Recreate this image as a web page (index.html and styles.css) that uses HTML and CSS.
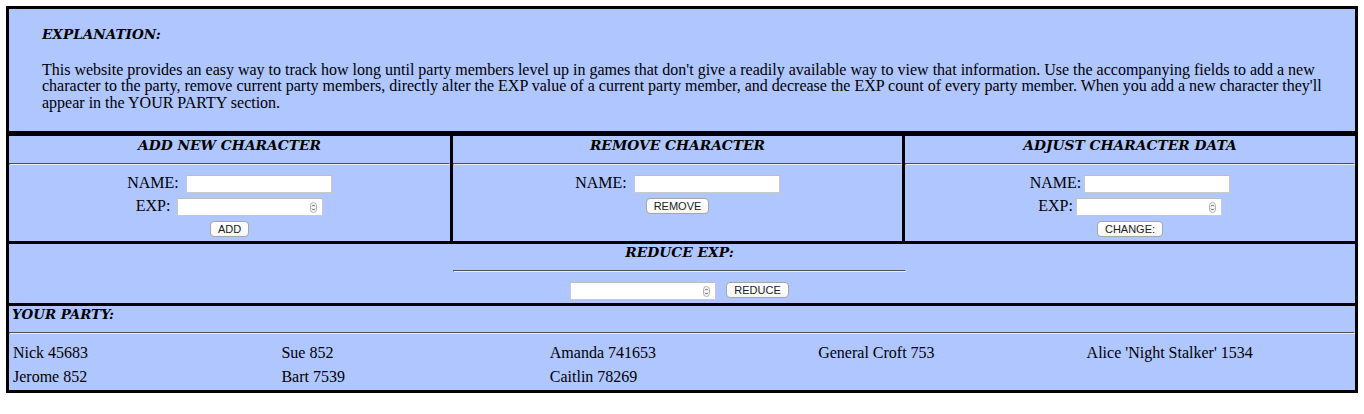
FILE: index.html
```html
<!DOCTYPE html>
<html lang="en">
<head>
<meta charset="utf-8">
<title>Party EXP Tracker</title>
<link rel="stylesheet" href="styles.css">
</head>
<body>
<div class="app">
  <section class="explain">
    <h3 class="explain-title">EXPLANATION:</h3>
    <p class="explain-text">This website provides an easy way to track how long until party members level up in games that don't give a readily available way to view that information. Use the accompanying fields to add a new character to the party, remove current party members, directly alter the EXP value of a current party member, and decrease the EXP count of every party member. When you add a new character they'll appear in the YOUR PARTY section.</p>
  </section>

  <div class="tools">
    <section class="tool">
      <h4 class="head">ADD NEW CHARACTER</h4>
      <hr class="rule">
      <div class="form">
        <label class="field"><span class="lbl">NAME:</span><input class="txt" type="text"></label>
        <label class="field"><span class="lbl">EXP:</span><span class="num"><input class="txt" type="number"><svg class="spin" viewBox="0 0 7 11" width="7" height="11"><rect x="0.5" y="0.5" width="6" height="10" rx="3" fill="#fafafa" stroke="#a0a0a0" stroke-width="0.8"/><path d="M2.1 4.3 L3.5 2.9 L4.9 4.3 M2.1 6.7 L3.5 8.1 L4.9 6.7" fill="none" stroke="#333" stroke-width="0.9"/></svg></span></label>
        <button class="btn" type="button">ADD</button>
      </div>
    </section>

    <section class="tool">
      <h4 class="head">REMOVE CHARACTER</h4>
      <hr class="rule">
      <div class="form">
        <label class="field"><span class="lbl">NAME:</span><input class="txt" type="text"></label>
        <button class="btn" type="button">REMOVE</button>
      </div>
    </section>

    <section class="tool">
      <h4 class="head">ADJUST CHARACTER DATA</h4>
      <hr class="rule">
      <div class="form">
        <label class="field field-tight"><span class="lbl">NAME:</span><input class="txt" type="text"></label>
        <label class="field field-tight"><span class="lbl">EXP:</span><span class="num"><input class="txt" type="number"><svg class="spin" viewBox="0 0 7 11" width="7" height="11"><rect x="0.5" y="0.5" width="6" height="10" rx="3" fill="#fafafa" stroke="#a0a0a0" stroke-width="0.8"/><path d="M2.1 4.3 L3.5 2.9 L4.9 4.3 M2.1 6.7 L3.5 8.1 L4.9 6.7" fill="none" stroke="#333" stroke-width="0.9"/></svg></span></label>
        <button class="btn" type="button">CHANGE:</button>
      </div>
    </section>
  </div>

  <section class="reduce">
    <h4 class="head head-reduce">REDUCE EXP:</h4>
    <hr class="rule rule-short">
    <div class="reduce-row">
      <span class="num"><input class="txt" type="number"><svg class="spin" viewBox="0 0 7 11" width="7" height="11"><rect x="0.5" y="0.5" width="6" height="10" rx="3" fill="#fafafa" stroke="#a0a0a0" stroke-width="0.8"/><path d="M2.1 4.3 L3.5 2.9 L4.9 4.3 M2.1 6.7 L3.5 8.1 L4.9 6.7" fill="none" stroke="#333" stroke-width="0.9"/></svg></span>
      <button class="btn" type="button">REDUCE</button>
    </div>
  </section>

  <section class="party">
    <h4 class="head head-party">YOUR PARTY:</h4>
    <hr class="rule">
    <div class="members">
      <div class="member">Nick 45683</div>
      <div class="member">Sue 852</div>
      <div class="member">Amanda 741653</div>
      <div class="member">General Croft 753</div>
      <div class="member">Alice 'Night Stalker' 1534</div>
      <div class="member">Jerome 852</div>
      <div class="member">Bart 7539</div>
      <div class="member">Caitlin 78269</div>
    </div>
  </section>
</div>
</body>
</html>
```

FILE: styles.css
```css
html, body {
  background: #ffffff;
}

body {
  margin: 6px;
  font-family: "Liberation Serif", "Times New Roman", serif;
  font-size: 16px;
  color: #000;
}

.app {
  border: 3px solid #000;
  background: #afc6fe;
}

/* ---------- explanation ---------- */
.explain {
  padding: 17px 33px 19px 33px;
  border-bottom: 5px solid #000;
}

.explain-title,
.head {
  margin: 0;
  font-family: "DejaVu Serif", "Liberation Serif", serif;
  font-size: 13.8px;
  line-height: 16px;
  font-weight: bold;
  font-style: italic;
}

.explain-title {
  font-size: 13.6px;
}

.explain-text {
  margin: 19.5px 0 0 0;
  font-size: 16px;
  line-height: 16.7px;
}

/* ---------- tool columns ---------- */
.tools {
  display: grid;
  grid-template-columns: 441fr 452fr 453fr;
  border-bottom: 3px solid #000;
}

.tool + .tool {
  border-left: 3px solid #000;
}

.head {
  padding-top: 1px;
  text-align: center;
}

.rule {
  margin: 10px 0 0 0;
  border: 1px inset #ececec;
  border-top-color: #a4a4a4;
  border-left-color: #a4a4a4;
  height: 0;
}

.form {
  display: flex;
  flex-direction: column;
  align-items: center;
  gap: 5px;
  padding: 10px 0 4px 0;
}

.field {
  display: flex;
  align-items: baseline;
  justify-content: center;
  gap: 7px;
}

.field-tight {
  gap: 3px;
}

.lbl {
  line-height: 16px;
}

.txt {
  box-sizing: border-box;
  width: 146px;
  height: 18px;
  margin: 0;
  padding: 0 3px;
  border: 1px solid #c9c9c9;
  border-top-color: #bdbdbd;
  background: #fff;
  font-family: "Liberation Sans", Arial, sans-serif;
  font-size: 13px;
  outline: none;
}

.txt[type="number"] {
  -moz-appearance: textfield;
  appearance: textfield;
}

.txt::-webkit-inner-spin-button,
.txt::-webkit-outer-spin-button {
  -webkit-appearance: none;
  margin: 0;
}

.num {
  position: relative;
  display: inline-flex;
}

.spin {
  position: absolute;
  right: 6px;
  top: 4px;
  display: block;
}

.btn {
  box-sizing: border-box;
  height: 16px;
  margin: 0;
  padding: 0 7px;
  border: 1px solid #a6a6a6;
  border-radius: 4px;
  background: linear-gradient(#ffffff, #f6f6f6);
  color: #222;
  font-family: "Liberation Sans", Arial, sans-serif;
  font-size: 11px;
  line-height: 14px;
}

/* ---------- reduce ---------- */
.reduce {
  padding-right: 5px;
  border-bottom: 3px solid #000;
}

.head-reduce {
  padding-top: 0;
}

.rule-short {
  width: 33.7%;
  margin-left: auto;
  margin-right: auto;
}

.reduce-row {
  display: flex;
  justify-content: center;
  align-items: flex-start;
  gap: 10px;
  padding: 10px 0 3px 0;
}

/* ---------- party ---------- */
.head-party {
  padding: 0 0 0 3px;
  text-align: left;
  font-size: 13.4px;
}

.members {
  display: grid;
  grid-template-columns: repeat(5, 1fr);
  padding: 7px 0 1px 4px;
}

.member {
  line-height: 24px;
  white-space: nowrap;
}
```
